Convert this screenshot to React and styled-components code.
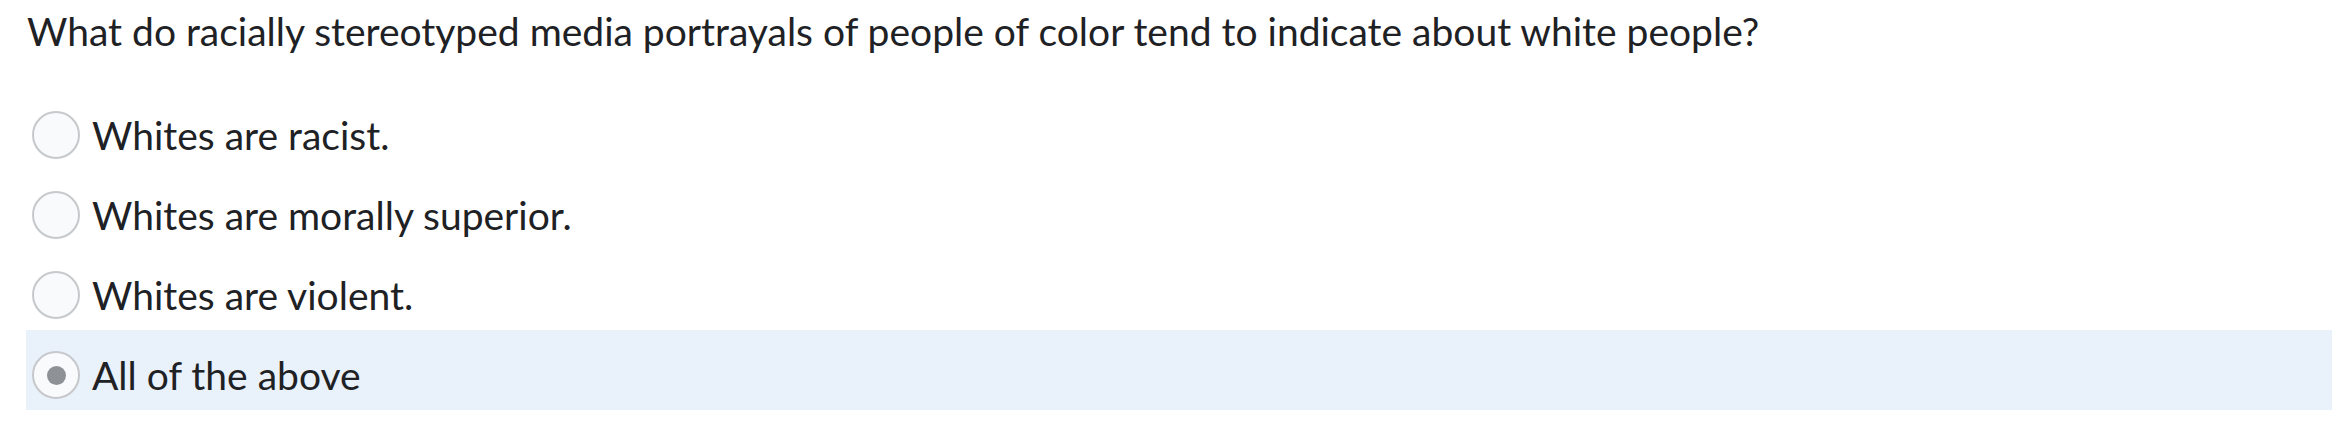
import React, { useState } from "react";
import styled, { createGlobalStyle } from "styled-components";

const GlobalStyle = createGlobalStyle`
  html, body {
    margin: 0;
    padding: 0;
    background: #ffffff;
  }
  body {
    font-family: Lato, "Noto Sans", sans-serif;
    color: #202124;
  }
`;

const QuestionWrap = styled.div`
  padding: 8px 18px 0 26px;
`;

const QuestionText = styled.p`
  margin: 0 0 0 1px;
  font-size: 39px;
  line-height: 46px;
  height: 82px;
`;

const AnswerList = styled.div`
  display: flex;
  flex-direction: column;
`;

const AnswerRow = styled.label`
  display: flex;
  align-items: center;
  gap: 12px;
  height: 80px;
  box-sizing: border-box;
  padding: 10px 0 0 6px;
  background: ${(p) => (p.$selected ? "#e9f1fb" : "transparent")};
  cursor: pointer;
`;

const Radio = styled.span`
  width: 44px;
  height: 44px;
  flex: none;
  border-radius: 50%;
  border: 2px solid #c6c8cb;
  background: #f9fafc;
  display: flex;
  align-items: center;
  justify-content: center;
`;

const RadioDot = styled.span`
  width: 19px;
  height: 19px;
  border-radius: 50%;
  background: #8e9195;
`;

const AnswerText = styled.span`
  font-size: 39px;
  line-height: 46px;
`;

const answers = [
  "Whites are racist.",
  "Whites are morally superior.",
  "Whites are violent.",
  "All of the above",
];

const App = () => {
  const [selected, setSelected] = useState(3);

  return (
    <>
      <GlobalStyle />
      <QuestionWrap>
        <QuestionText>
          What do racially stereotyped media portrayals of people of color tend
          to indicate about white people?
        </QuestionText>
        <AnswerList>
          {answers.map((answer, index) => (
            <AnswerRow
              key={index}
              $selected={selected === index}
              onClick={() => setSelected(index)}
            >
              <Radio>{selected === index && <RadioDot />}</Radio>
              <AnswerText>{answer}</AnswerText>
            </AnswerRow>
          ))}
        </AnswerList>
      </QuestionWrap>
    </>
  );
};

export default App;
